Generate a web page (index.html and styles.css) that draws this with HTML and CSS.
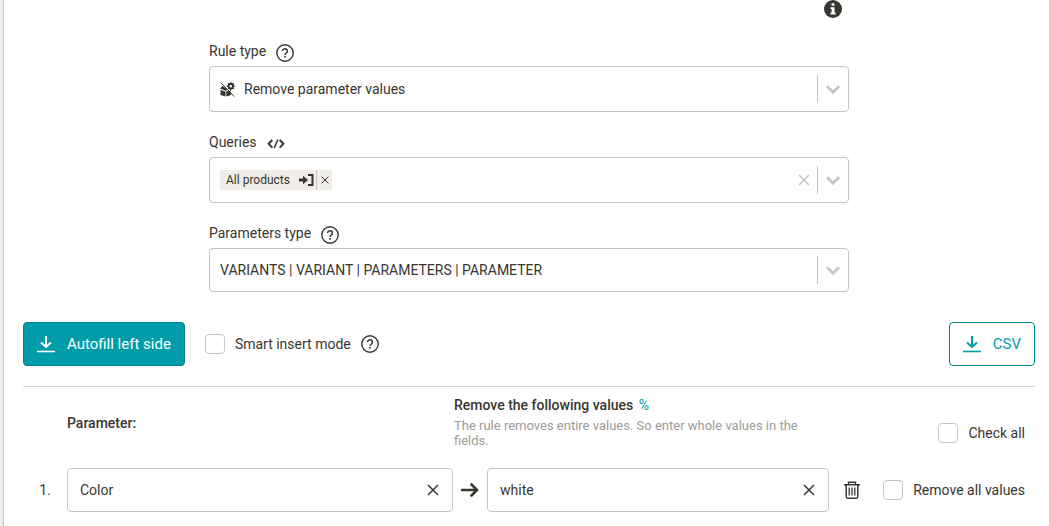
FILE: index.html
```html
<!DOCTYPE html>
<html lang="en">
<head>
    <meta charset="UTF-8">
    <meta name="viewport" content="width=device-width, initial-scale=1.0">
    <title>Edit rule</title>
    <link rel="stylesheet" href="styles.css">
</head>
<body>
    <!-- shared icons -->
    <svg class="icon-defs" aria-hidden="true">
        <symbol id="icon-help" viewBox="0 0 18 18">
            <circle cx="9" cy="9" r="8.2" fill="none" stroke="currentColor" stroke-width="1.4"/>
            <path d="M6.6 7.1a2.4 2.3 0 1 1 3.7 1.900c-.9.6-1.3.9-1.3 1.900" fill="none" stroke="currentColor" stroke-width="1.5"/>
            <rect x="8.2" y="12" width="1.6" height="1.6" fill="currentColor"/>
        </symbol>
        <symbol id="icon-chevron" viewBox="0 0 14 9">
            <path d="M1 1.200l6 6 6-6" fill="none" stroke="currentColor" stroke-width="2.800"/>
        </symbol>
        <symbol id="icon-x" viewBox="0 0 12 12">
            <path d="M1 1l10 10M11 1 1 11" fill="none" stroke="currentColor" stroke-width="1.5"/>
        </symbol>
        <symbol id="icon-download" viewBox="0 0 18 18">
            <path d="M9 1v11M4 7.500l5 4.500 5-4.500" fill="none" stroke="currentColor" stroke-width="2"/>
            <path d="M0 16.500h18" stroke="currentColor" stroke-width="1.600"/>
        </symbol>
    </svg>

    <main class="panel">
        <form class="rule-form">
            <div class="info-row">
                <button type="button" class="icon-button" aria-label="Information">
                    <svg class="icon" viewBox="0 0 18 18">
                        <circle cx="9" cy="9" r="9" fill="currentColor"/>
                        <path d="M7.600 3.200h2.800v2.500H7.600zM6.500 7.200h4v5.400h1.100v1.900H6.500v-1.900h1.100V9.100H6.500z" fill="#fff"/>
                    </svg>
                </button>
            </div>

            <div class="field">
                <div class="field-label">
                    <label for="rule-type">Rule type</label>
                    <button type="button" class="icon-button" aria-label="Rule type help"><svg class="icon"><use href="#icon-help"/></svg></button>
                </div>
                <div class="select-box">
                    <svg class="rule-icon" viewBox="0 0 15 15" aria-hidden="true">
                        <path d="M.500 8l5 1.500V14.500L.500 13zM6.300 9.500l4.700-1.500v5L6.300 14.500zM0 6.500l2.500-2.500 5.500 3.700-2.300 1z" fill="currentColor"/>
                        <circle cx="10.800" cy="4.200" r="2.200" fill="none" stroke="currentColor" stroke-width="1.800"/>
                        <path d="M10.800.300v1.700M10.800 6.400v1.700M6.900 4.200h1.700M13 4.200h1.700M8 1.400l1.200 1.200M13.600 1.400l-1.200 1.200M13.600 7l-1.200-1.200M8 7l1.200-1.200" stroke="currentColor" stroke-width="1.500"/>
                        <path d="M1.500.200l13 13.800" stroke="#fff" stroke-width="1"/>
                        <path d="M.700.700l13.500 13.800" stroke="currentColor" stroke-width="1"/>
                    </svg>
                    <select id="rule-type" class="select">
                        <option>Remove parameter values</option>
                    </select>
                    <span class="select-arrow"><svg class="chevron"><use href="#icon-chevron"/></svg></span>
                </div>
            </div>

            <div class="field">
                <div class="field-label">
                    <label for="queries">Queries</label>
                    <button type="button" class="icon-button" aria-label="Edit as code">
                        <svg class="icon" viewBox="0 0 18 18">
                            <path d="M5.300 5 1.600 8.800l3.700 3.800M12.700 5l3.700 3.800-3.700 3.800" fill="none" stroke="currentColor" stroke-width="2"/>
                            <path d="M10.800 4.500 7.200 13" stroke="currentColor" stroke-width="1.600"/>
                        </svg>
                    </button>
                </div>
                <div class="select-box">
                    <div class="tag">
                        <span class="tag-text">All products</span>
                        <button type="button" class="tag-open" aria-label="Open query">
                            <svg viewBox="0 0 15 12">
                                <path d="M0 4.500h4V1.700L9 6l-5 4.300V7.500H0z" fill="currentColor"/>
                                <path d="M9 1h4.500v10H9" fill="none" stroke="currentColor" stroke-width="2"/>
                            </svg>
                        </button>
                        <button type="button" class="tag-remove" aria-label="Remove All products"><svg><use href="#icon-x"/></svg></button>
                    </div>
                    <input id="queries" class="select" type="text" autocomplete="off">
                    <button type="button" class="clear-all" aria-label="Clear queries"><svg class="x"><use href="#icon-x"/></svg></button>
                    <span class="select-arrow"><svg class="chevron"><use href="#icon-chevron"/></svg></span>
                </div>
            </div>

            <div class="field">
                <div class="field-label">
                    <label for="parameters-type">Parameters type</label>
                    <button type="button" class="icon-button" aria-label="Parameters type help"><svg class="icon"><use href="#icon-help"/></svg></button>
                </div>
                <div class="select-box compact">
                    <select id="parameters-type" class="select">
                        <option>VARIANTS | VARIANT | PARAMETERS | PARAMETER</option>
                    </select>
                    <span class="select-arrow"><svg class="chevron"><use href="#icon-chevron"/></svg></span>
                </div>
            </div>
        </form>

        <div class="toolbar">
            <button type="button" class="btn btn-primary"><svg class="icon"><use href="#icon-download"/></svg>Autofill left side</button>
            <label class="check"><input type="checkbox">Smart insert mode</label>
            <button type="button" class="icon-button" aria-label="Smart insert mode help"><svg class="icon"><use href="#icon-help"/></svg></button>
            <button type="button" class="btn btn-outline"><svg class="icon"><use href="#icon-download"/></svg>CSV</button>
        </div>

        <section class="values">
            <div class="values-header">
                <h2 class="values-title">Parameter:</h2>
                <div class="values-info">
                    <h2 class="values-title">Remove the following values <a href="#" class="percent">%</a></h2>
                    <p class="hint">The rule removes entire values. So enter whole values in the fields.</p>
                </div>
                <label class="check check-all"><input type="checkbox">Check all</label>
            </div>

            <div class="values-row">
                <span class="row-number">1.</span>
                <div class="input-box input-parameter">
                    <input type="text" value="Color" aria-label="Parameter">
                    <button type="button" aria-label="Clear parameter"><svg class="x"><use href="#icon-x"/></svg></button>
                </div>
                <svg class="arrow" viewBox="0 0 18 14" aria-hidden="true">
                    <path d="M1 7h15M10.500 1.500 16 7l-5.500 5.500" fill="none" stroke="currentColor" stroke-width="2.600" stroke-linecap="round"/>
                </svg>
                <div class="input-box input-value">
                    <input type="text" value="white" aria-label="Value">
                    <button type="button" aria-label="Clear value"><svg class="x"><use href="#icon-x"/></svg></button>
                </div>
                <button type="button" class="icon-button delete" aria-label="Delete row">
                    <svg class="icon" viewBox="0 0 18 18">
                        <path d="M1 3.700h16M5.500 3.500V1.200h7v2.300M3.200 4v11.500q0 1.700 1.500 1.700h8.600q1.500 0 1.500-1.700V4" fill="none" stroke="currentColor" stroke-width="1.500"/>
                        <path d="M6.200 6.500v8M9 6.500v8M11.800 6.500v8" stroke="currentColor" stroke-width="1.300"/>
                    </svg>
                </button>
                <label class="check"><input type="checkbox">Remove all values</label>
            </div>
        </section>
    </main>
</body>
</html>
```

FILE: styles.css
```css
* {
    margin: 0;
    padding: 0;
    box-sizing: border-box;
}

:root {
    --primary: #009ca9;
    --primary-dark: #00818c;
    --text: #373630;
    --muted: #9b9b99;
    --border: #c9c4c0;
    --line: #d5d5d3;
    --beige: #f0ede6;
}

body {
    background: var(--beige);
    color: var(--text);
    font-family: Roboto, sans-serif;
    font-size: 14px;
    line-height: 20px;
    min-height: 100vh;
    padding-left: 3px;
}

button,
input,
select {
    font: inherit;
    color: inherit;
}

button {
    background: none;
    border: none;
    cursor: pointer;
}

svg {
    display: block;
}

.icon-defs {
    display: none;
}

.icon {
    width: 18px;
    height: 18px;
}

.x {
    width: 12px;
    height: 12px;
}

.icon-button {
    flex: none;
}

.panel {
    background: #fff;
    border-left: 1px solid var(--border);
    min-height: 100vh;
    padding: 0 14px 14px 19px;
}

/* Rule form */
.rule-form {
    max-width: 640px;
    margin: 0 auto 30px;
}

.info-row {
    display: flex;
    justify-content: flex-end;
    padding-right: 7px;
    margin-bottom: 24px;
}

.field + .field {
    margin-top: 21px;
}

.field-label {
    display: flex;
    align-items: flex-end;
    gap: 10px;
    height: 20px;
    margin-bottom: 4px;
}

.field-label label {
    align-self: flex-start;
    line-height: 18px;
}

.select-box {
    display: flex;
    align-items: center;
    height: 46px;
    padding-left: 10px;
    border: 1px solid var(--border);
    border-radius: 4px;
}

.select-box.compact {
    height: 44px;
}

.rule-icon {
    width: 15px;
    height: 15px;
    margin-right: 9px;
}

.select {
    flex: 1;
    min-width: 0;
    height: 100%;
    border: none;
    outline: none;
    background: none;
    appearance: none;
}

.select-arrow {
    display: flex;
    align-items: center;
    height: 28px;
    padding: 0 8px;
    border-left: 1px solid var(--border);
    color: var(--border);
    pointer-events: none;
}

.chevron {
    width: 14px;
    height: 9px;
}

.clear-all {
    padding: 7px;
    color: var(--border);
}

.tag {
    display: flex;
    align-items: center;
    height: 20px;
    padding-left: 6px;
    background: var(--beige);
    border-radius: 2px;
    font-size: 12px;
}

.tag-open {
    padding: 0 2px 0 9px;
}

.tag-open svg {
    width: 15px;
    height: 12px;
}

.tag-remove {
    height: 100%;
    padding: 0 3px 0 4px;
    border-left: 1px solid var(--border);
}

.tag-remove svg {
    width: 8px;
    height: 8px;
}

/* Toolbar */
.toolbar {
    display: flex;
    align-items: center;
    padding-bottom: 20px;
    border-bottom: 1px solid var(--line);
}

.toolbar .check {
    margin: 0 10px 0 20px;
}

.btn {
    display: flex;
    align-items: center;
    gap: 12px;
    height: 44px;
    padding: 0 13px;
    border: 1px solid var(--primary-dark);
    border-radius: 4px;
    font-size: 15px;
}

.btn-primary {
    background: var(--primary);
    color: #fff;
}

.btn-outline {
    margin-left: auto;
    background: #fff;
    color: var(--primary);
}

.check {
    display: flex;
    align-items: center;
    gap: 10px;
    white-space: nowrap;
    cursor: pointer;
}

.check input {
    width: 20px;
    height: 20px;
    border: 1px solid var(--border);
    border-radius: 4px;
    background: #fff;
    appearance: none;
}

.check input:checked {
    background: var(--primary);
}

/* Values */
.values-header {
    display: grid;
    grid-template-columns: 387fr 360fr 211fr;
    align-items: center;
    padding: 8px 10px 18px 44px;
}

.values-title {
    font-size: 14px;
    font-weight: 500;
}

.percent {
    margin-left: 2px;
    color: var(--primary);
    font-weight: 400;
    text-decoration: none;
}

.hint {
    color: var(--muted);
    font-size: 13px;
    line-height: 15px;
    padding: 3px 0 2px;
}

.check-all {
    justify-self: end;
    padding-top: 20px;
}

.values-row {
    display: flex;
    align-items: center;
    padding-right: 10px;
}

.row-number {
    width: 44px;
    text-align: center;
}

.input-box {
    display: flex;
    align-items: center;
    height: 44px;
    border: 1px solid var(--border);
    border-radius: 4px;
}

.input-parameter {
    flex: 386 1 0;
}

.input-value {
    flex: 342 1 0;
}

.input-box input {
    flex: 1;
    min-width: 0;
    height: 100%;
    padding-left: 12px;
    border: none;
    outline: none;
    background: none;
}

.input-box button {
    padding: 13px;
}

.arrow {
    width: 18px;
    height: 14px;
    margin: 0 8px;
}

.delete {
    margin: 0 22px 0 14px;
}
```
